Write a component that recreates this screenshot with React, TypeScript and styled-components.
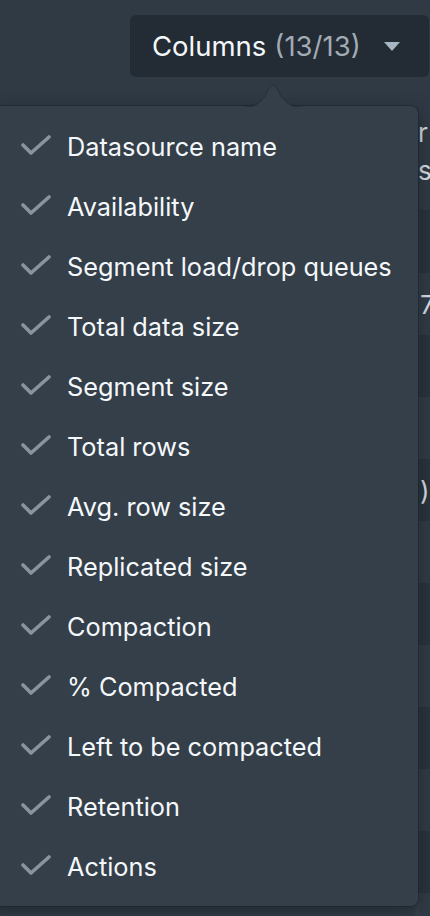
import React from "react";
import styled, { createGlobalStyle } from "styled-components";

const columns = [
  "Datasource name",
  "Availability",
  "Segment load/drop queues",
  "Total data size",
  "Segment size",
  "Total rows",
  "Avg. row size",
  "Replicated size",
  "Compaction",
  "% Compacted",
  "Left to be compacted",
  "Retention",
  "Actions",
];

// what peeks out of the table to the right of the popover
const rowValues = ["", "7", "", "", ")", "", "", "", "", "", "", ""];

const GlobalStyle = createGlobalStyle`
  html, body {
    margin: 0;
    padding: 0;
    background: #2f3a45;
  }
  body {
    font-family: Inter, "Noto Sans", sans-serif;
    -webkit-font-smoothing: antialiased;
  }
`;

const Page = styled.div`
  position: relative;
  width: 430px;
  height: 916px;
  overflow: hidden;
  background: #2f3a45;
`;

const Toolbar = styled.div`
  display: flex;
  justify-content: flex-end;
  padding: 16px 2px 0 0;
  height: 76px;
  box-sizing: border-box;
`;

const ColumnsButton = styled.button`
  display: flex;
  align-items: center;
  width: 297px;
  height: 60px;
  padding: 0 28px 0 21px;
  box-sizing: border-box;
  background: #232c35;
  border: none;
  border-radius: 5px;
  box-shadow: 0 0 0 1px rgba(16, 22, 26, 0.4);
  color: #f5f8fa;
  font-family: inherit;
  font-size: 27.5px;
  cursor: pointer;
`;

const Count = styled.span`
  margin-left: 8px;
  color: #a2abb4;
`;

const Caret = styled.span`
  margin-left: auto;
  width: 0;
  height: 0;
  border-left: 8px solid transparent;
  border-right: 8px solid transparent;
  border-top: 9px solid #a7b6c2;
`;

const Table = styled.div`
  display: flex;
  flex-direction: column;
  margin-top: 30px;
`;

const HeaderRow = styled.div`
  height: 105px;
  display: flex;
  justify-content: flex-end;
  padding: 8px 0 0;
  box-sizing: border-box;
  border-bottom: 1px solid #26303a;
  color: #d9dee3;
  font-size: 26px;
  line-height: 38px;
`;

const HeaderText = styled.span`
  width: 12px;
  overflow: hidden;
  white-space: pre;
`;

const Row = styled.div<{ $light: boolean }>`
  height: 62px;
  display: flex;
  justify-content: flex-end;
  background: ${({ $light }) => ($light ? "#303b46" : "#29333d")};
  color: #d9dee3;
  font-size: 26px;
`;

const Cell = styled.span<{ $light: boolean }>`
  width: 10px;
  overflow: hidden;
  display: flex;
  align-items: center;
  border-left: 5px solid ${({ $light }) => ($light ? "#343f4a" : "#2c3640")};
`;

const Popover = styled.div`
  position: absolute;
  left: -12px;
  top: 106px;
  width: 430px;
  padding: 10px 0 10px;
  box-sizing: border-box;
  background: #343f4a;
  border-radius: 7px;
  box-shadow: 0 0 0 1px rgba(16, 22, 26, 0.3), 0 4px 16px rgba(16, 22, 26, 0.5);
`;

const Arrow = styled.svg`
  position: absolute;
  top: -22px;
  left: 255px;
  width: 60px;
  height: 23px;
`;

const Menu = styled.ul`
  list-style: none;
  margin: 0;
  padding: 0;
`;

const Item = styled.li`
  display: flex;
  align-items: center;
  height: 60px;
  padding-left: 33px;
  color: #f5f8fa;
  font-size: 25.3px;
  white-space: nowrap;
`;

const Tick = styled.svg`
  width: 30px;
  height: 22px;
  margin-right: 16px;
  flex-shrink: 0;
`;

const App = () => {
  return (
    <Page>
      <GlobalStyle />
      <Toolbar>
        <ColumnsButton>
          Columns<Count>(13/13)</Count>
          <Caret />
        </ColumnsButton>
      </Toolbar>
      <Table>
        <HeaderRow>
          <HeaderText>{"r\ns"}</HeaderText>
        </HeaderRow>
        {rowValues.map((v, i) => (
          <Row key={i} $light={i % 2 === 1}>
            <Cell $light={i % 2 === 1}>{v}</Cell>
          </Row>
        ))}
      </Table>
      <Popover>
        <Arrow viewBox="0 0 60 23">
          <path
            d="M0 23 C12 23 16 20 22 12 C26 4 28 1 30 1 C32 1 34 4 38 12 C44 20 48 23 60 23 Z"
            fill="#343f4a"
          />
          <path
            d="M0 23 C12 23 16 20 22 12 C26 4 28 1 30 1 C32 1 34 4 38 12 C44 20 48 23 60 23"
            fill="none"
            stroke="rgba(16,22,26,0.35)"
            strokeWidth="1"
          />
        </Arrow>
        <Menu>
          {columns.map(c => (
            <Item key={c}>
              <Tick viewBox="0 0 30 22">
                <polyline
                  points="2,10 10,18 28,2"
                  fill="none"
                  stroke="#8a949e"
                  strokeWidth="3.6"
                  strokeLinecap="round"
                  strokeLinejoin="round"
                />
              </Tick>
              {c}
            </Item>
          ))}
        </Menu>
      </Popover>
    </Page>
  );
};

export default App;
